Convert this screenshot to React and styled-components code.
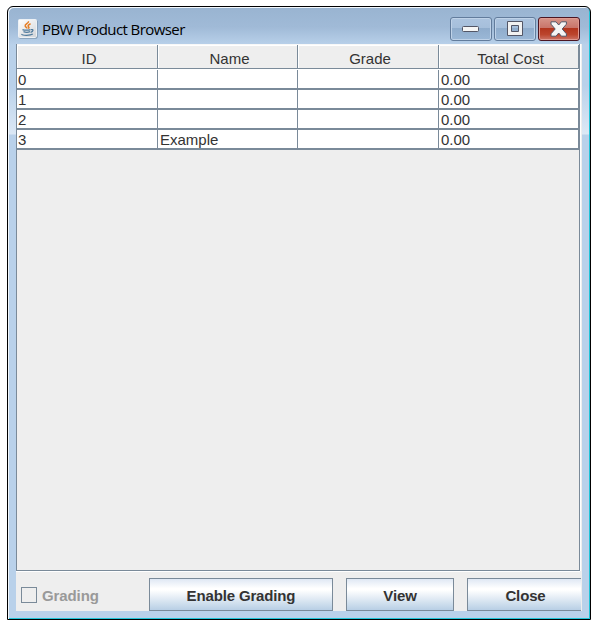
import React from "react";
import styled, { createGlobalStyle } from "styled-components";

const line = "#7a8a99";

const GlobalStyle = createGlobalStyle`
  * { box-sizing: border-box; }
  body { margin: 0; background: #fff; overflow: hidden; }
`;

const Page = styled.main`
  width: 596px;
  height: 627px;
  padding: 6px 5px 7px 7px;
  font-family: "Liberation Sans", Arial, sans-serif;
  font-size: 15px;
  color: #333;
`;

const Window = styled.section`
  display: flex;
  flex-direction: column;
  width: 584px;
  height: 614px;
  padding: 0 7px 7px;
  border: 1px solid #000;
  border-radius: 6px 6px 0 0;
  box-shadow: inset 1px 1px 0 #f3f8fd, inset -1px -1px 0 #20c4d8;
  background: linear-gradient(#99b4d1 0, #a0bad7 20px, #b9d1ea 38px, #b9d1ea 78px, #dce8f5 127px, #b9d1ea 128px);
`;

const TitleBar = styled.header`
  display: flex;
  align-items: center;
  height: 37px;
  flex: none;
  padding: 7px 3px 0;
`;

const Title = styled.h1`
  flex: 1;
  margin: 0 0 0 4px;
  font: 400 15px/20px "Open Sans", "Noto Sans", sans-serif;
  letter-spacing: -0.57px;
  color: #000;
  white-space: nowrap;
`;

const WindowControls = styled.nav`
  display: flex;
  gap: 2px;
`;

const ControlButton = styled.button`
  display: grid;
  place-items: center;
  width: 42px;
  height: 24px;
  padding: 0;
  border: 1px solid ${(p) => (p.$close ? "#4b1522" : "#627c9c")};
  border-radius: 3px;
  box-shadow: inset 0 0 0 1px ${(p) => (p.$close ? "#df9a91" : "#bfd2e8")};
  background: ${(p) =>
    p.$close
      ? "linear-gradient(#d69489 0, #c9756a 44%, #b2341d 46%, #bc452d 75%, #cc7467)"
      : "linear-gradient(#acc4df 0, #a6bfdb 44%, #8faccc 46%, #9bb8d7)"};
`;

const Content = styled.div`
  display: flex;
  flex-direction: column;
  width: 566px;
  height: 567px;
  margin-left: 1px;
  background: #eee;
`;

const ScrollPane = styled.div`
  flex: none;
  width: 564px;
  height: 527px;
  border: solid ${line};
  border-width: 0 1px 1px;
  box-shadow: 0 1px 0 #fff, 1px 0 0 #fff;
`;

const Columns = styled.div`
  display: grid;
  grid-template-columns: 141px 140px 141px 140px;
`;

const HeaderRow = styled(Columns)`
  height: 26px;
  border-top: 1px solid #f8f8f8;
  border-bottom: 1px solid #fff;
`;

const HeaderCell = styled.div`
  height: 24px;
  border-right: 1px solid ${line};
  border-bottom: 1px solid ${line};
  box-shadow: inset 1px 1px 0 #fff;
  padding: 4px 0 0 4px;
  text-align: center;
  line-height: 19px;
`;

const Row = styled(Columns)`
  height: 20px;
  background: #fff;
  border-bottom: 2px solid ${line};
`;

const Cell = styled.div`
  height: 18px;
  border-right: 1px solid ${line};
  padding-left: ${(p) => (p.$first ? "1px" : "2px")};
  line-height: 19px;
`;

const Footer = styled.footer`
  display: flex;
  flex: none;
  align-items: flex-start;
  gap: 13px;
  height: 39px;
  margin-top: 1px;
  padding: 6px 0 0 5px;
  overflow: hidden;
  font-weight: 700;
`;

const CheckLabel = styled.label`
  display: flex;
  align-items: center;
  gap: 5px;
  width: 115px;
  height: 34px;
  color: #999;
  letter-spacing: -0.1px;
`;

const CheckBox = styled.span`
  width: 16px;
  height: 16px;
  border: 1px solid ${line};
`;

const PushButton = styled.button`
  flex: none;
  width: ${(p) => p.$width}px;
  height: 33px;
  border: 1px solid ${line};
  border-right-width: ${(p) => (p.$clipped ? 0 : 1)}px;
  padding: 2px 0 0 ${(p) => (p.$clipped ? 2 : 0)}px;
  background: linear-gradient(#dfe8f4 0, #fff 30%, #fff 36%, #b8cfe5 100%);
  font: 700 15px/29px "Liberation Sans", Arial, sans-serif;
  letter-spacing: -0.15px;
  color: #333;
`;

const JavaIcon = () => (
  <svg width="20" height="20" viewBox="0 0 20 20" aria-hidden="true">
    <defs>
      <linearGradient id="tile" x2="0.7" y2="1">
        <stop stopColor="#fff" />
        <stop offset="1" stopColor="#d7d9dc" />
      </linearGradient>
    </defs>
    <rect x="1" y="1" width="18.5" height="18.5" rx="1.5" fill="#68849c" />
    <rect x="0.5" y="0.5" width="18" height="18" rx="1" fill="url(#tile)" stroke="#edf1f5" />
    <path d="M10.5 2.2c.6 2-4.3 3-3.3 5 .4.9 1.8 1.2 1.8 2.4M12.6 4.8c-2.6 1-3.1 2.2-1.9 3.2.5.5.2 1.1-.4 1.6" fill="none" stroke="#e57c22" strokeWidth="1.5" />
    <path d="M4.5 10.6c1.8.8 6.3.7 8 0M5.5 12.6c1.8.8 5 .7 6.5 0M13 10.7c2.7-.8 2.7 1.7-.4 2.6M3.8 15c-.6 1.7 8.7 1.8 11 .1" fill="none" stroke="#507b9d" strokeWidth="1.2" />
  </svg>
);

const MinimizeIcon = () => (
  <svg width="18" height="8" viewBox="0 0 18 8" aria-hidden="true">
    <rect x="0.5" y="1.5" width="16" height="5" rx="1" fill="#f5f5f5" stroke="#535666" />
  </svg>
);

const MaximizeIcon = () => (
  <svg width="18" height="16" viewBox="0 0 18 16" aria-hidden="true">
    <path d="M1.5.5h15v14h-15zM5.5 4.5v6h7v-6z" fill="#f2f2f2" fillRule="evenodd" stroke="#535666" strokeLinejoin="round" />
  </svg>
);

const CloseIcon = () => (
  <svg width="20" height="16" viewBox="0 0 20 16" aria-hidden="true">
    <path d="M2 .8h5L9.7 4l2.7-3.2h5v2.4L13.2 8l4.2 4.8v2.4h-5L9.7 12 7 15.2H2v-2.4L6.2 8 2 3.2z" fill="#f5f5f5" stroke="#535666" strokeLinejoin="round" />
  </svg>
);

const headings = ["ID", "Name", "Grade", "Total Cost"];
const products = [
  ["0", "", "", "0.00"],
  ["1", "", "", "0.00"],
  ["2", "", "", "0.00"],
  ["3", "Example", "", "0.00"],
];

export default function App() {
  return (
    <Page>
      <GlobalStyle />
      <Window>
        <TitleBar>
          <JavaIcon />
          <Title>PBW Product Browser</Title>
          <WindowControls>
            <ControlButton aria-label="Minimize"><MinimizeIcon /></ControlButton>
            <ControlButton aria-label="Maximize"><MaximizeIcon /></ControlButton>
            <ControlButton aria-label="Close" $close><CloseIcon /></ControlButton>
          </WindowControls>
        </TitleBar>
        <Content>
          <ScrollPane>
            <HeaderRow>
              {headings.map((h) => <HeaderCell key={h}>{h}</HeaderCell>)}
            </HeaderRow>
            {products.map((product) => (
              <Row key={product[0]}>
                {product.map((value, i) => <Cell key={i} $first={i === 0}>{value}</Cell>)}
              </Row>
            ))}
          </ScrollPane>
          <Footer>
            <CheckLabel><CheckBox />Grading</CheckLabel>
            <PushButton $width={184}>Enable Grading</PushButton>
            <PushButton $width={108}>View</PushButton>
            <PushButton $width={114} $clipped>Close</PushButton>
          </Footer>
        </Content>
      </Window>
    </Page>
  );
}
